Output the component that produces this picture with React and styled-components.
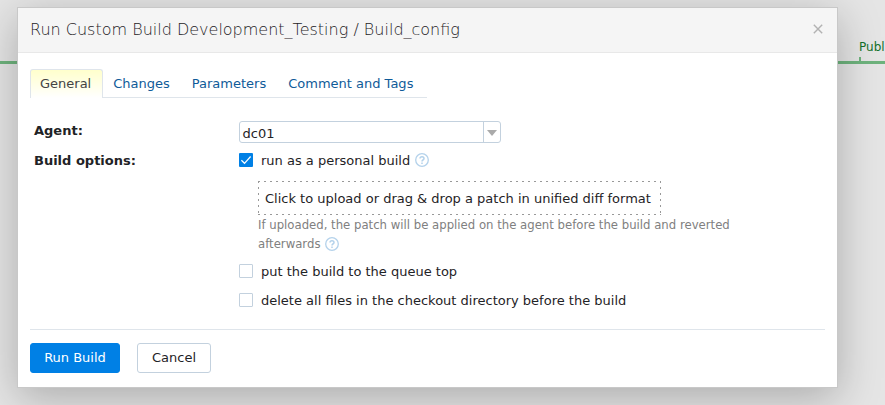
import React from 'react';
import styled, { createGlobalStyle } from 'styled-components';

const Global = createGlobalStyle`
  *{box-sizing:border-box}
  body{margin:0;font:13px/18px "DejaVu Sans",sans-serif;color:#1f2326;background:#e5e5e5;overflow:hidden}
  button,input{font:inherit;color:inherit}
`;
const Page = styled.div`position:relative;width:885px;height:405px;overflow:hidden;`;
const Timeline = styled.div`
  position:absolute;top:61px;left:0;right:0;height:3px;background:#6eb37d;
`;
const Stage = styled.div`
  position:absolute;top:38px;left:859px;font-size:12px;color:#14712b;white-space:nowrap;
  &::after{content:'';position:absolute;left:0;top:19px;width:2px;height:5px;background:#6eb37d}
`;
const Dialog = styled.section`
  position:absolute;left:17px;top:7px;width:821px;height:381px;
  background:#fff;border:1px solid #c8c8c8;box-shadow:0 10px 40px rgba(0,0,0,.25);
`;
const Header = styled.header`
  display:flex;justify-content:space-between;align-items:center;height:45px;
  padding:0 14px 1px 12px;background:#f5f5f5;border-bottom:1px solid #e8e8e8;
`;
const Title = styled.h1`margin:0;font-size:16px;font-weight:200;line-height:20px;color:#1f2326;white-space:nowrap;`;
const Close = styled.button`
  display:flex;padding:0 0 2px;border:0;background:none;
  svg{stroke:#b2b2b2;stroke-width:1.4}
`;
const Body = styled.div`padding:16px 12px 0;`;
const Tabs = styled.nav`display:flex;width:397px;height:29px;border-bottom:1px solid #dfe5eb;`;
const Tab = styled.a`
  height:29px;white-space:nowrap;line-height:${p => (p.$active ? 28 : 30)}px;
  padding:0 ${p => (p.$active ? '11px 0 9px' : '12px 0 10px')};
  color:${p => (p.$active ? '#444' : '#0f5b99')};
  ${p => p.$active && `border:1px solid #dfe5eb;border-bottom:0;border-radius:3px 3px 0 0;
    background:linear-gradient(#ffffcc,#fff);`}
`;
const Form = styled.div`
  display:grid;grid-template-columns:205px 1fr;padding:23px 0 0 4px;height:231px;
  grid-template-rows:30px 1fr;
`;
const Label = styled.div`font-weight:700;line-height:20px;`;
const Select = styled.div`
  display:flex;width:262px;height:22px;border:1px solid #c3d1de;border-radius:3px;
  span{flex:1;padding-left:2.5px;line-height:23px}
`;
const Arrow = styled.div`
  display:flex;align-items:center;justify-content:center;width:17px;padding-top:2px;border-left:1px solid #c3d1de;
`;
const Options = styled.div`display:flex;flex-direction:column;`;
const Option = styled.label`display:flex;align-items:center;height:20px;margin-top:${p => p.$gap || 0}px;`;
const Box = styled.span`
  display:flex;width:14px;height:14px;margin:0 8px 2px 0;border-radius:1px;
  background:${p => (p.$checked ? '#0080e5' : '#fff')};
  border:${p => (p.$checked ? '0' : '1px solid #c3d1de')};
`;
const Help = styled.svg`width:14px;height:14px;margin:0 0 2px 5px;flex:none;`;
const Drop = styled.div`
  display:flex;margin:10px 0 0 19px;width:403px;height:34px;align-items:center;padding:1px 0 0 7px;
  white-space:nowrap;
  background:
    repeating-linear-gradient(90deg,#999 0 2px,transparent 2px 6px) top/100% 1px no-repeat,
    repeating-linear-gradient(90deg,#999 0 2px,transparent 2px 6px) bottom/100% 1px no-repeat,
    repeating-linear-gradient(#999 0 2px,transparent 2px 6px) left/1px 100% no-repeat,
    repeating-linear-gradient(#999 0 2px,transparent 2px 6px) right/1px 100% no-repeat;
`;
const Note = styled.div`
  margin:1px 0 0 19px;font-size:11.7px;line-height:19px;color:#808080;white-space:nowrap;
  div{display:flex;align-items:center;height:19px}
`;
const Footer = styled.footer`display:flex;gap:17px;padding-top:13px;border-top:1px solid #dfe5eb;`;
const Button = styled.button`
  height:30px;padding:0;width:${p => (p.$primary ? 90 : 74)}px;border-radius:3px;
  border:1px solid ${p => (p.$primary ? '#0080e5' : '#c3d1de')};
  background:${p => (p.$primary ? '#0080e5' : '#fff')};
  color:${p => (p.$primary ? '#fff' : '#1f2326')};
`;

function HelpIcon() {
  return (
    <Help viewBox="0 0 14 14" fill="none" stroke="#b4d2eb" strokeWidth="1.3">
      <circle cx="7" cy="7" r="6.3" />
      <path d="M5 5.6Q5 3.7 7 3.7T9 5.5Q9 6.3 7.9 7Q7 7.6 7 8.5M7 9.6V11" strokeWidth="1.5" />
    </Help>
  );
}

export default function App() {
  return (
    <>
      <Global />
      <Page>
        <Timeline />
        <Stage>Publ</Stage>
        <Dialog>
          <Header>
            <Title>Run Custom Build Development_Testing / Build_config</Title>
            <Close aria-label="Close">
              <svg width="10" height="10" viewBox="0 0 10 10"><path d="M.8 .8L9.2 9.2M9.2 .8L.8 9.2" /></svg>
            </Close>
          </Header>
          <Body>
            <Tabs>
              <Tab $active>General</Tab>
              <Tab>Changes</Tab>
              <Tab>Parameters</Tab>
              <Tab>Comment and Tags</Tab>
            </Tabs>
            <Form>
              <Label>Agent:</Label>
              <Select>
                <span>dc01</span>
                <Arrow><svg width="10" height="6"><path d="M0 0H10L5 6Z" fill="#aaa" /></svg></Arrow>
              </Select>
              <Label>Build options:</Label>
              <Options>
                <Option>
                  <Box $checked><svg width="14" height="14" fill="none" stroke="#fff" strokeWidth="1.2"><path d="M2.4 7.3L5.5 10.3L11.6 3.5" /></svg></Box>
                  run as a personal build<HelpIcon />
                </Option>
                <Drop>Click to upload or drag &amp; drop a patch in unified diff format</Drop>
                <Note>
                  <div>If uploaded, the patch will be applied on the agent before the build and reverted</div>
                  <div>afterwards<HelpIcon /></div>
                </Note>
                <Option $gap={8}><Box />put the build to the queue top</Option>
                <Option $gap={9}><Box />delete all files in the checkout directory before the build</Option>
              </Options>
            </Form>
            <Footer>
              <Button $primary>Run Build</Button>
              <Button>Cancel</Button>
            </Footer>
          </Body>
        </Dialog>
      </Page>
    </>
  );
}
